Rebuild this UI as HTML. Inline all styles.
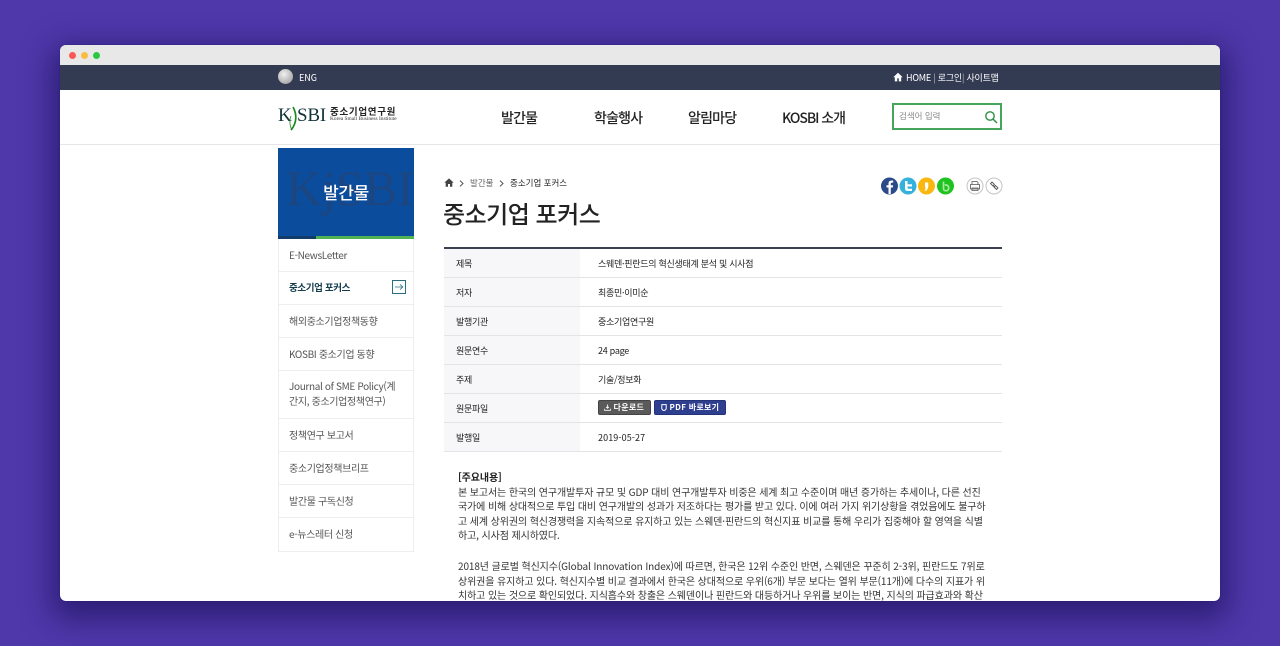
<!DOCTYPE html>
<html lang="ko">
<head>
<meta charset="utf-8">
<title>중소기업 포커스</title>
<style>
*{box-sizing:border-box;margin:0;padding:0}
html,body{width:1280px;height:646px;overflow:hidden;background:#4f38aa}
body{position:relative;font-family:"Noto Sans CJK KR","Liberation Sans",sans-serif;color:#222}
.a{position:absolute;white-space:nowrap}
#win{position:absolute;left:60px;top:45px;width:1160px;height:556px;background:#fff;border-radius:6px;overflow:hidden;box-shadow:0 0 1px #1f1768,0 10px 30px 8px rgba(25,15,85,.62)}
#inner{position:absolute;left:-60px;top:-45px;width:1280px;height:646px}
.dot{position:absolute;top:51.500px;width:7.500px;height:7.500px;border-radius:50%}
.nav{position:absolute;top:108px;font-size:14px;line-height:20px;font-weight:500;color:#222;white-space:nowrap;letter-spacing:-.8px}
.side{position:absolute;left:278px;width:136px;border:1px solid #eeeeee;border-top:0;font-size:10px;color:#555;line-height:15px;padding-left:10px;padding-bottom:2px;display:flex;align-items:center;letter-spacing:-.35px}
.row{position:absolute;left:444px;width:558px;height:29px;border-bottom:1px solid #e4e4e4;font-size:9px;line-height:30px;color:#222;letter-spacing:-.28px}
.row b{position:absolute;left:0;top:0;width:136px;height:28px;background:#f7f7f9;font-weight:400;padding-left:12px}
.row span{position:absolute;left:154px;top:0;white-space:nowrap}
.tx{position:absolute;left:458px;font-size:10px;line-height:14.500px;color:#333;white-space:nowrap;letter-spacing:-.11px}
</style>
</head>
<body>
<div id="win"><div id="inner">
  <div class="a" style="left:0;top:45px;width:1280px;height:20px;background:#e8e8e8"></div>
  <div class="dot" style="left:68.700px;background:#fc5753"></div>
  <div class="dot" style="left:80.700px;background:#fdbc40"></div>
  <div class="dot" style="left:92.700px;background:#28c941"></div>
  <div class="a" style="left:0;top:65px;width:1280px;height:25px;background:#333b52"></div>
  <div class="a" style="left:278px;top:69px;width:15px;height:15px;border-radius:50%;background:radial-gradient(circle at 40% 35%,#f0f0f0,#aaa 75%,#999)"></div>
  <div class="a" style="left:299px;top:71px;font-size:9px;line-height:13px;color:#fff">ENG</div>
  <svg class="a" style="left:893px;top:72px" width="10" height="10" viewBox="0 0 10 10"><path d="M5 .8 .3 5.200h1.500V9.400h2.400V6.400h1.600v3h2.400V5.200h1.500z" fill="#fff"/></svg>
  <div class="a" style="left:906px;top:71px;font-size:9px;line-height:13px;color:#fff;letter-spacing:-.22px">HOME <span style="opacity:.6">|</span> 로그인<span style="opacity:.6">|</span> 사이트맵</div>

  <div class="a" style="left:278px;top:104px;font-family:'Liberation Serif',serif;font-size:19px;line-height:24px;color:#12333c;letter-spacing:-.2px">K<span style="display:inline-block;width:5.500px"></span>SBI</div>
  <svg class="a" style="left:287px;top:106px" width="11" height="26" viewBox="0 0 11 26"><path d="M6 1C10 8 10 17 4 24" fill="none" stroke="#1c8a1c" stroke-width="1.700"/><path d="M4 10C2 15 3 21 5 24" fill="none" stroke="#1c8a1c" stroke-width=".8"/></svg>
  <div class="a" style="left:330px;top:105px;font-size:9.500px;line-height:12px;font-weight:700;color:#222;letter-spacing:.7px">중소기업연구원</div>
  <div class="a" style="left:330px;top:116px;font-family:'Liberation Serif',serif;font-size:5.400px;line-height:7px;color:#333">Korea Small Business Institute</div>

  <div class="nav" style="left:501px">발간물</div>
  <div class="nav" style="left:594px">학술행사</div>
  <div class="nav" style="left:688px">알림마당</div>
  <div class="nav" style="left:782px;letter-spacing:-1.050px">KOSBI 소개</div>

  <div class="a" style="left:892px;top:103px;width:110px;height:27px;border:2px solid #45a55a"></div>
  <div class="a" style="left:899px;top:110px;font-size:8.500px;line-height:13px;color:#888">검색어 입력</div>
  <svg class="a" style="left:984px;top:110px" width="14" height="14" viewBox="0 0 14 14"><circle cx="6" cy="6" r="4.200" fill="none" stroke="#2f8f45" stroke-width="1.400"/><path d="M9 9l4 4" stroke="#2f8f45" stroke-width="1.500"/></svg>
  <div class="a" style="left:0;top:144px;width:1280px;height:1px;background:#e6e6e6"></div>

  <div class="a" style="left:278px;top:148px;width:136px;height:91px;background:#0b4d9c;overflow:hidden">
    <div class="a" style="left:8px;top:12px;font-family:'Liberation Serif',serif;font-size:50px;line-height:56px;color:#1b4682;letter-spacing:0">KjSBI</div>
    <div class="a" style="left:0;top:88px;width:136px;height:3px;background:#123d6a"></div>
    <div class="a" style="left:38px;top:88px;width:98px;height:3px;background:#4fb355"></div>
    <div class="a" style="left:0;width:136px;top:32px;text-align:center;font-size:17px;line-height:24px;color:#fff;font-weight:500;letter-spacing:-.4px">발간물</div>
  </div>

  <div class="side" style="top:239px;height:33px">E-NewsLetter</div>
  <div class="side" style="top:272px;height:33px;color:#123c4c;font-weight:700;font-size:9.500px">중소기업 포커스</div>
  <div class="a" style="left:392px;top:280px;width:14px;height:14px;border:1px solid #2d6d80"></div>
  <svg class="a" style="left:394px;top:282px" width="10" height="10" viewBox="0 0 10 10"><path d="M1 5h8M6 2.400 8.800 5 6 7.600" fill="none" stroke="#2d6d80" stroke-width=".8"/></svg>
  <div class="side" style="top:305px;height:33px">해외중소기업정책동향</div>
  <div class="side" style="top:338px;height:33px">KOSBI 중소기업 동향</div>
  <div class="side" style="top:371px;height:48px;display:block;padding-top:7px">Journal of SME Policy(계<br>간지, 중소기업정책연구)</div>
  <div class="side" style="top:419px;height:33px">정책연구 보고서</div>
  <div class="side" style="top:452px;height:33px">중소기업정책브리프</div>
  <div class="side" style="top:485px;height:33px">발간물 구독신청</div>
  <div class="side" style="top:518px;height:34px">e-뉴스레터 신청</div>

  <svg class="a" style="left:444px;top:178px" width="10" height="9" viewBox="0 0 10 9"><path d="M5 .4 .3 4.600h1.400V8.800h2.300V6h2v2.800h2.300V4.600h1.400z" fill="#444"/></svg>
  <svg class="a" style="left:459px;top:180px" width="5" height="7" viewBox="0 0 5 7"><path d="M1 .6 4 3.500 1 6.400" fill="none" stroke="#444" stroke-width=".9"/></svg>
  <div class="a" style="left:470px;top:177px;font-size:8.500px;line-height:12px;color:#666">발간물</div>
  <svg class="a" style="left:499px;top:180px" width="5" height="7" viewBox="0 0 5 7"><path d="M1 .6 4 3.500 1 6.400" fill="none" stroke="#444" stroke-width=".9"/></svg>
  <div class="a" style="left:510px;top:177px;font-size:8.500px;line-height:12px;color:#222">중소기업 포커스</div>
  <div class="a" style="left:443px;top:197px;font-size:24px;line-height:32px;font-weight:500;color:#222;letter-spacing:-.5px">중소기업 포커스</div>

  <svg class="a" style="left:881px;top:177px" width="122" height="18" viewBox="0 0 122 18">
    <circle cx="8.500" cy="9" r="8.500" fill="#2b4a8b"/><path d="M9.800 17V10.500h2l.3-2.300H9.800V6.800c0-.8.300-1.200 1.200-1.200h1.200V3.600c-2.900-.4-4.700.5-4.700 3v1.600h-2v2.300h2V17z" fill="#fff"/>
    <circle cx="27" cy="9" r="8.500" fill="#35b2dc"/><path d="M24 4v7.500c0 1.600 1 2.500 2.600 2.500H31v-2.300h-3.500c-.7 0-1-.3-1-.9V9.500H31V7.300h-4.500V4z" fill="#fff"/>
    <circle cx="45.500" cy="9" r="8.500" fill="#f9b70f"/><path d="M44 5.500h3.300v3.500c0 2.200-1 3.900-2.700 5l-1-.8c.7-.9 1-1.700 1-2.700H44z" fill="#fff"/>
    <circle cx="64.500" cy="9" r="8.500" fill="#1fc31f"/><path d="M62.500 4.500v7c0 1.400 1 2.300 2.500 2.300s2.700-1.200 2.700-2.900-1.200-2.900-2.700-2.900c-.5 0-.9.100-1.200.3" fill="none" stroke="#a6e8a0" stroke-width="1.700"/>
    <circle cx="94" cy="9" r="8" fill="#fff" stroke="#c4c4c4"/><path d="M91 7.500V4.500h5l1 1v2M89.500 7.500h9v4.500h-9zM91 11h6v2.500h-6z" fill="#fff" stroke="#555" stroke-width=".8"/>
    <circle cx="113" cy="9" r="8" fill="#fff" stroke="#c4c4c4"/><path d="M109.500 6.500l1.500-1.500 2.500 2.500-1.500 1.500zM113 10l1.500-1.500 2.500 2.500-1.500 1.500zM112 8.500l2 2" fill="none" stroke="#555" stroke-width=".9"/>
  </svg>

  <div class="a" style="left:444px;top:247px;width:558px;height:2px;background:#3c4152"></div>
  <div class="row" style="top:249px"><b>제목</b><span>스웨덴·핀란드의 혁신생태계 분석 및 시사점</span></div>
  <div class="row" style="top:278px"><b>저자</b><span>최종민·이미순</span></div>
  <div class="row" style="top:307px"><b>발행기관</b><span>중소기업연구원</span></div>
  <div class="row" style="top:336px"><b>원문연수</b><span>24 page</span></div>
  <div class="row" style="top:365px"><b>주제</b><span>기술/정보화</span></div>
  <div class="row" style="top:394px"><b>원문파일</b></div>
  <div class="row" style="top:423px"><b>발행일</b><span style="letter-spacing:.1px">2019-05-27</span></div>

  <div class="a" style="left:598px;top:400px;width:53px;height:15px;background:#5a5a5a;border:1px solid #444;border-radius:2px;color:#fff;font-size:8px;line-height:13px;padding-left:5px;font-weight:700;letter-spacing:.3px">
    <svg width="7" height="7" viewBox="0 0 7 7" style="vertical-align:-1px"><path d="M3.500 .5v3.500M2 2.800 3.500 4.300 5 2.800M.6 4.800v1.500h5.800V4.800" fill="none" stroke="#fff" stroke-width=".8"/></svg> 다운로드</div>
  <div class="a" style="left:654px;top:400px;width:72px;height:15px;background:#2f3f90;border:1px solid #243278;border-radius:2px;color:#fff;font-size:8px;line-height:13px;padding-left:6px;font-weight:700;letter-spacing:.3px">
    <svg width="6" height="7" viewBox="0 0 6 7" style="vertical-align:-1px"><path d="M.8.600h4.400v3.600c0 1.200-1 2-2.200 2.300C1.800 6.200.8 5.400.8 4.200z" fill="none" stroke="#fff" stroke-width="1"/></svg> PDF 바로보기</div>

  <div class="tx" style="top:470px;font-weight:700;color:#222">[주요내용]</div>
  <div class="tx" style="top:484.500px">본 보고서는 한국의 연구개발투자 규모 및 GDP 대비 연구개발투자 비중은 세계 최고 수준이며 매년 증가하는 추세이나, 다른 선진</div>
  <div class="tx" style="top:499px">국가에 비해 상대적으로 투입 대비 연구개발의 성과가 저조하다는 평가를 받고 있다. 이에 여러 가지 위기상황을 겪었음에도 불구하</div>
  <div class="tx" style="top:513.500px">고 세계 상위권의 혁신경쟁력을 지속적으로 유지하고 있는 스웨덴·핀란드의 혁신지표 비교를 통해 우리가 집중해야 할 영역을 식별</div>
  <div class="tx" style="top:528px">하고, 시사점 제시하였다.</div>
  <div class="tx" style="top:559px">2018년 글로벌 혁신지수(Global Innovation Index)에 따르면, 한국은 12위 수준인 반면, 스웨덴은 꾸준히 2-3위, 핀란드도 7위로</div>
  <div class="tx" style="top:573.500px">상위권을 유지하고 있다. 혁신지수별 비교 결과에서 한국은 상대적으로 우위(6개) 부문 보다는 열위 부문(11개)에 다수의 지표가 위</div>
  <div class="tx" style="top:588px">치하고 있는 것으로 확인되었다. 지식흡수와 창출은 스웨덴이나 핀란드와 대등하거나 우위를 보이는 반면, 지식의 파급효과와 확산</div>
</div></div>
</body>
</html>
